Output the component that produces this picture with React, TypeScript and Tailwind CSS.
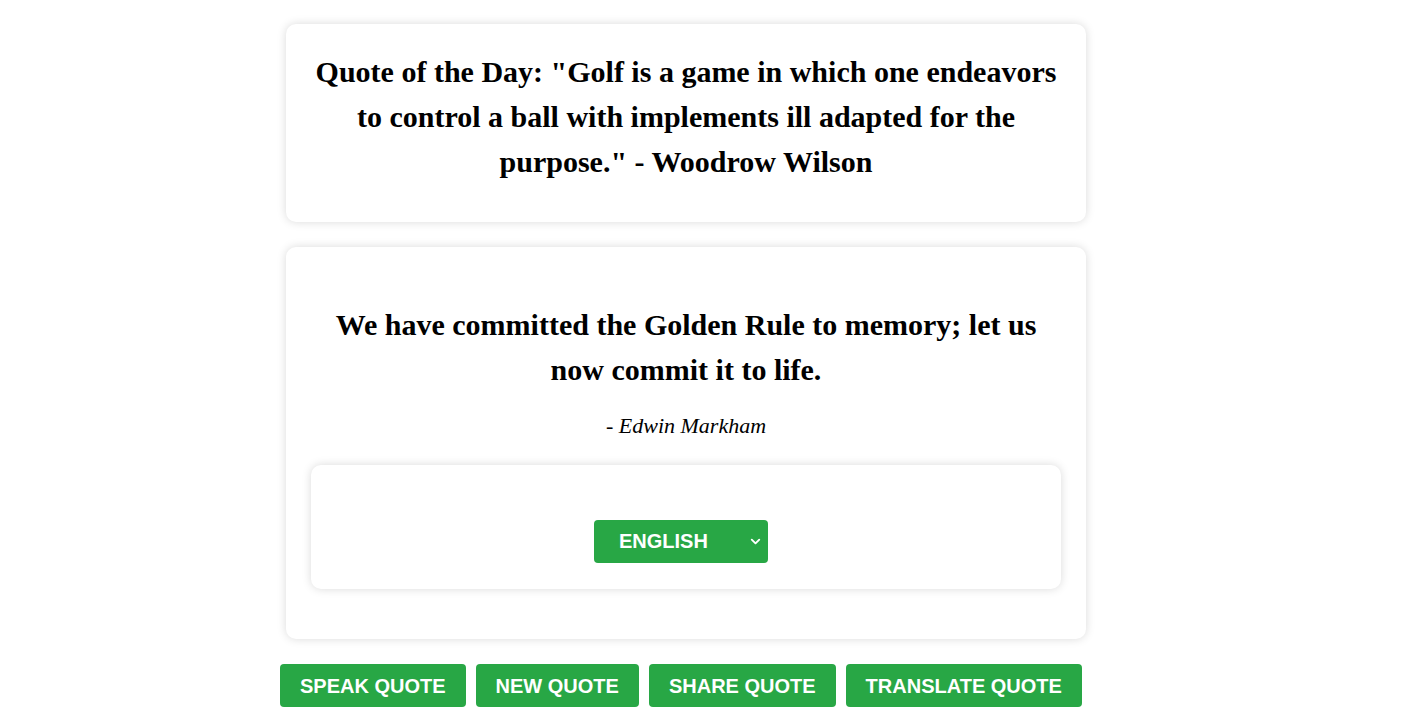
import { ChevronDown } from 'lucide-react';

export default function App() {
  const buttons = ['Speak Quote', 'New Quote', 'Share Quote', 'Translate Quote'];

  return (
    <div className="min-h-screen bg-white pt-6 font-['Liberation_Serif',serif] text-black">
      <div className="ml-[286px] w-[800px]">
        <div className="rounded-[10px] bg-white px-[25px] pt-[25px] pb-[38px] shadow-[0_0_10px_rgba(0,0,0,0.15)]">
          <h2 className="text-center text-[30px] font-bold leading-[45px]">
            Quote of the Day: "Golf is a game in which one endeavors to control a ball with implements ill
            adapted for the purpose." - Woodrow Wilson
          </h2>
        </div>

        <div className="mt-[25px] rounded-[10px] bg-white px-[25px] pt-[55px] pb-[50px] shadow-[0_0_10px_rgba(0,0,0,0.15)]">
          <p className="mx-auto max-w-[720px] text-center text-[30px] font-bold leading-[45px]">
            We have committed the Golden Rule to memory; let us now commit it to life.
          </p>
          <p className="mt-[19px] text-center text-[22px] italic leading-[30px]">- Edwin Markham</p>

          <div className="mt-[24px] flex justify-center rounded-[10px] bg-white pt-[55px] pb-[26px] shadow-[0_0_10px_rgba(0,0,0,0.15)]">
            <div className="relative mr-[10px] h-[43px] w-[174px] rounded-[4px] bg-[#28a745] font-['Liberation_Sans',Arial,sans-serif] text-white">
              <span className="absolute left-[25px] top-0 text-[20px] font-bold leading-[43px]">ENGLISH</span>
              <ChevronDown className="absolute right-[5px] top-[14px] h-[15px] w-[15px]" strokeWidth={3} />
            </div>
          </div>
        </div>
      </div>

      <div className="ml-[280px] mt-[25px] flex gap-[10px] font-['Liberation_Sans',Arial,sans-serif]">
        {buttons.map((b) => (
          <button
            key={b}
            className="h-[43px] rounded-[4px] bg-[#28a745] px-[20px] text-[20px] font-bold uppercase text-white"
          >
            {b}
          </button>
        ))}
      </div>
    </div>
  );
}
